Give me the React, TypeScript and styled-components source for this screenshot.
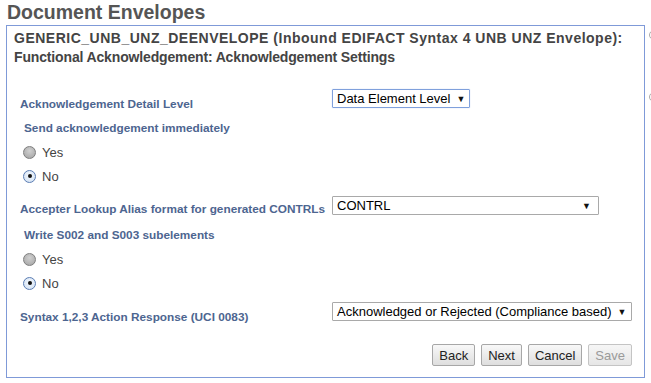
import styled, { createGlobalStyle } from "styled-components";

const GlobalStyle = createGlobalStyle`
	html, body {
		margin: 0;
		padding: 0;
		background: #fff;
		font-family: "Liberation Sans", Arial, sans-serif;
	}
`;

type Option = { label: string; checked?: boolean };

const yesNo: Option[] = [{ label: "Yes" }, { label: "No", checked: true }];

export default function App() {
	return (
		<>
			<GlobalStyle />
			<Page>
				<Main>
					<Title>Document Envelopes</Title>
					<Panel>
						<Heading>
							<HeadLine $spacing={0.5}>
								GENERIC_UNB_UNZ_DEENVELOPE (Inbound EDIFACT Syntax 4 UNB UNZ Envelope):
							</HeadLine>
							<HeadLine $spacing={-0.15}>
								Functional Acknowledgement: Acknowledgement Settings
							</HeadLine>
						</Heading>
						<Form>
							<Row $top={22}>
								<Label $offset={8}>Acknowledgement Detail Level</Label>
								<Select $width={138} $focused>
									<span>Data Element Level</span>
									<Arrow>▼</Arrow>
								</Select>
							</Row>
							<Group $top={8}>
								<Question>Send acknowledgement immediately</Question>
								{yesNo.map((o) => (
									<RadioRow key={o.label}>
										<Radio $checked={o.checked} />
										{o.label}
									</RadioRow>
								))}
							</Group>
							<Row $top={8}>
								<Label $offset={6}>Accepter Lookup Alias format for generated CONTRLs</Label>
								<Select $width={267}>
									<span>CONTRL</span>
									<Arrow>▼</Arrow>
								</Select>
							</Row>
							<Group $top={8}>
								<Question>Write S002 and S003 subelements</Question>
								{yesNo.map((o) => (
									<RadioRow key={o.label}>
										<Radio $checked={o.checked} />
										{o.label}
									</RadioRow>
								))}
							</Group>
							<Row $top={7}>
								<Label $offset={8}>Syntax 1,2,3 Action Response (UCI 0083)</Label>
								<Select $width={300}>
									<span>Acknowledged or Rejected (Compliance based)</span>
									<Arrow>▼</Arrow>
								</Select>
							</Row>
							<Buttons>
								<Button>Back</Button>
								<Button>Next</Button>
								<Button>Cancel</Button>
								<Button disabled>Save</Button>
							</Buttons>
						</Form>
					</Panel>
				</Main>
				<Side>
					<SideMark $top={30} />
					<SideMark $top={92} />
				</Side>
			</Page>
		</>
	);
}

const Page = styled.div`
	display: flex;
	width: 651px;
	height: 383px;
	overflow: hidden;
	padding-left: 6px;
	box-sizing: border-box;
`;
const Main = styled.div`
	width: 639px;
	flex-shrink: 0;
`;
const Title = styled.h1`
	margin: 0;
	padding: 1px 0 0 1px;
	height: 25px;
	box-sizing: border-box;
	font-size: 19.5px;
	line-height: 23px;
	font-weight: 700;
	color: #555;
`;
const Panel = styled.div`
	box-sizing: border-box;
	height: 353px;
	border: 1px solid #7f9ad8;
	padding: 3px 12px 0 0;
`;
const Heading = styled.div`
	padding-left: 7px;
	font-size: 14px;
	line-height: 19px;
	font-weight: 700;
	color: #444;
`;
const HeadLine = styled.div<{ $spacing: number }>`
	height: 19px;
	letter-spacing: ${(p) => p.$spacing}px;
	white-space: nowrap;
`;
const Form = styled.div`
	padding-left: 13px;
	display: flex;
	flex-direction: column;
`;
const Row = styled.div<{ $top: number }>`
	display: grid;
	grid-template-columns: 312px auto;
	grid-template-rows: 19px;
	align-items: start;
	margin-top: ${(p) => p.$top}px;
`;
const Label = styled.div<{ $offset?: number }>`
	padding-top: ${(p) => p.$offset ?? 8}px;
	font-size: 11.8px;
	line-height: 14px;
	font-weight: 700;
	color: #4d6590;
	white-space: nowrap;
`;
const Select = styled.div<{ $width: number; $focused?: boolean }>`
	box-sizing: border-box;
	width: ${(p) => p.$width}px;
	height: 19px;
	display: flex;
	align-items: center;
	justify-content: space-between;
	padding: 0 7px 0 4px;
	border: 1px solid ${(p) => (p.$focused ? "#7fa0dc" : "#a9a9a9")};
	border-radius: 1px;
	box-shadow: ${(p) => (p.$focused ? "0 0 1px #9fbbe8" : "none")};
	font-size: 13px;
	color: #000;
	white-space: nowrap;
`;
const Arrow = styled.span`
	font-size: 9px;
	color: #111;
	margin-left: 6px;
`;
const Group = styled.div<{ $top: number }>`
	margin-top: ${(p) => p.$top}px;
	padding-left: 3px;
`;
const Question = styled.div`
	padding-left: 1px;
	font-size: 11.8px;
	line-height: 24px;
	font-weight: 700;
	color: #4d6590;
`;
const RadioRow = styled.div`
	display: flex;
	align-items: center;
	gap: 6px;
	height: 24px;
	font-size: 13px;
	color: #444;
`;
const Radio = styled.span<{ $checked?: boolean }>`
	box-sizing: border-box;
	width: 13px;
	height: 13px;
	border-radius: 50%;
	display: flex;
	align-items: center;
	justify-content: center;
	border: 1px solid ${(p) => (p.$checked ? "#5b7db3" : "#7e7e7e")};
	background: ${(p) =>
		p.$checked
			? "radial-gradient(circle at 50% 40%, #f2f7fd, #cfdff2)"
			: "radial-gradient(circle at 50% 35%, #d0d0d0, #a2a2a2)"};
	&::after {
		content: "";
		width: 4px;
		height: 4px;
		border-radius: 50%;
		background: #111;
		display: ${(p) => (p.$checked ? "block" : "none")};
	}
`;
const Buttons = styled.div`
	display: flex;
	justify-content: flex-end;
	gap: 6px;
	margin-top: 23px;
`;
const Button = styled.button`
	box-sizing: border-box;
	height: 22px;
	padding: 0 6px;
	border: 1px solid #a7a7a7;
	border-radius: 2px;
	background: linear-gradient(#f8f8f8, #dedede);
	font-family: "Liberation Sans", Arial, sans-serif;
	font-size: 13px;
	color: #222;
	&:disabled {
		color: #9a9a9a;
		border-color: #c4c4c4;
		background: linear-gradient(#f6f6f6, #e6e6e6);
	}
`;
const Side = styled.div`
	position: relative;
	flex: 1;
	overflow: hidden;
`;
const SideMark = styled.span<{ $top: number }>`
	position: absolute;
	left: 4px;
	top: ${(p) => p.$top}px;
	width: 8px;
	height: 8px;
	border-radius: 50%;
	border: 1px solid #aaa;
`;
